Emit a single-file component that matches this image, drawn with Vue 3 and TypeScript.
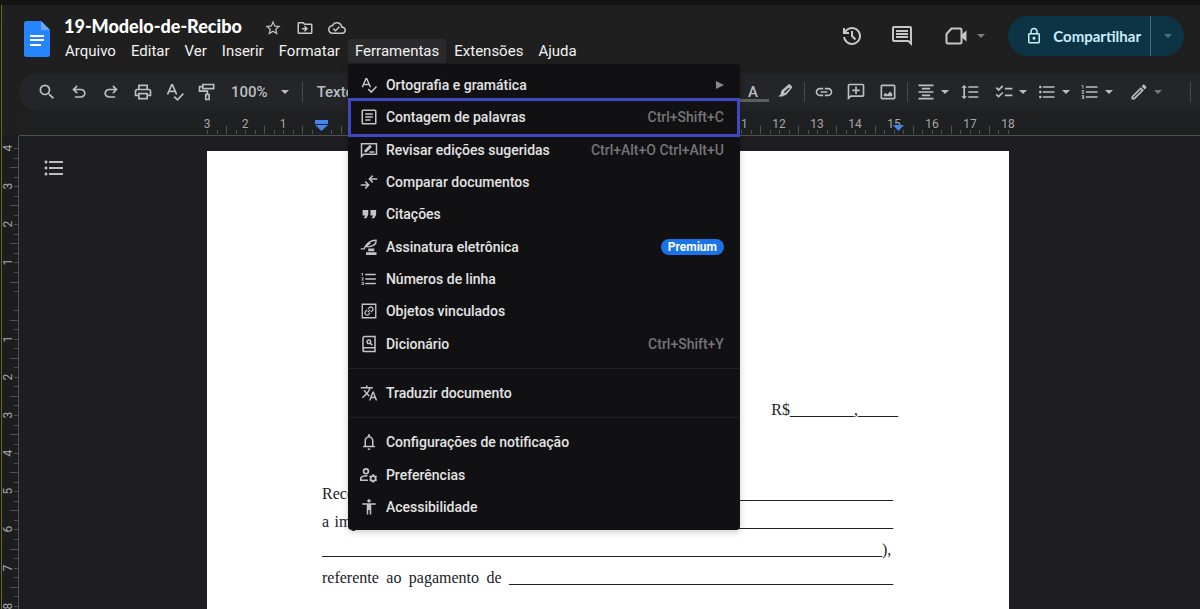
<script setup lang="ts">
import { h, type FunctionalComponent } from 'vue'

interface Glyph {
  f?: string
  s?: string
  w?: number
}

const glyphs: Record<string, Glyph> = {
  star: { f: 'M22 9.24l-7.19-.62L12 2 9.19 8.63 2 9.24l5.46 4.73L5.82 21 12 17.27 18.18 21l-1.63-7.03L22 9.24zM12 15.4l-3.76 2.27 1-4.28-3.32-2.88 4.38-.38L12 6.1l1.71 4.04 4.38.38-3.32 2.88 1 4.28L12 15.4z' },
  move: { f: 'M20 6h-8l-2-2H4c-1.1 0-2 .9-2 2v12c0 1.1.9 2 2 2h16c1.1 0 2-.9 2-2V8c0-1.1-.9-2-2-2zm0 12H4V6h5.17l2 2H20v10zM12.16 12H8v2h4.16l-1.59 1.59L11.99 17 16 13.01 11.99 9l-1.41 1.41z' },
  cloud: { f: 'M19.35 10.04C18.67 6.59 15.64 4 12 4 9.11 4 6.61 5.64 5.36 8.04 2.35 8.36 0 10.9 0 14c0 3.31 2.69 6 6 6h13c2.76 0 5-2.24 5-5 0-2.64-2.05-4.78-4.65-4.96zM19 18H6c-2.21 0-4-1.79-4-4 0-2.05 1.53-3.76 3.56-3.97l1.07-.11.5-.95C8.08 7.14 9.94 6 12 6c2.62 0 4.88 1.86 5.39 4.43l.3 1.5 1.53.11c1.56.1 2.78 1.41 2.78 2.96 0 1.65-1.35 3-3 3zm-9-3.82l-2.09-2.09L6.5 13.5 10 17l6.01-6.01-1.41-1.41z' },
  history: { f: 'M12 21q-3.45 0-6.012-2.287Q3.425 16.425 3.05 13H5.1q.35 2.6 2.313 4.3T12 19q2.925 0 4.963-2.037T19 12t-2.037-4.963T12 5q-1.725 0-3.225.8T6.25 8H9v2H3V4h2v2.35q1.275-1.6 3.113-2.475T12 3q1.875 0 3.513.713t2.85 1.924 1.925 2.85T21 12t-.712 3.513-1.925 2.85-2.85 1.925T12 21m2.8-4.8L11 12.4V7h2v4.6l3.2 3.2z' },
  comment: { f: 'M21.99 4c0-1.1-.89-2-1.99-2H4c-1.1 0-2 .9-2 2v12c0 1.1.9 2 2 2h14l4 4-.01-18zM20 4v13.17L18.83 16H4V4h16zM6 12h12v2H6zm0-3h12v2H6zm0-3h12v2H6z' },
  camera: { f: 'M17 11l5.500-4.500v11L17 13z', s: 'M7.500 4.500H16a1.500 1.500 0 0 1 1.500 1.500v12a1.500 1.500 0 0 1-1.500 1.500H4A1.500 1.500 0 0 1 2.500 18v-8z' },
  lock: { f: 'M18 8h-1V6c0-2.76-2.24-5-5-5S7 3.24 7 6v2H6c-1.1 0-2 .9-2 2v10c0 1.1.9 2 2 2h12c1.1 0 2-.9 2-2V10c0-1.1-.9-2-2-2zM9 6c0-1.66 1.34-3 3-3s3 1.34 3 3v2H9V6zm9 14H6V10h12v10zm-6-3c1.1 0 2-.9 2-2s-.9-2-2-2-2 .9-2 2 .9 2 2 2z' },
  search: { f: 'M15.5 14h-.79l-.28-.27A6.471 6.471 0 0 0 16 9.5 6.5 6.5 0 1 0 9.5 16c1.61 0 3.09-.59 4.23-1.57l.27.28v.79l5 4.99L20.49 19l-4.99-5zm-6 0C7.01 14 5 11.99 5 9.5S7.01 5 9.5 5 14 7.01 14 9.5 11.99 14 9.5 14z' },
  undo: { f: 'M7 19v-2h7.1q1.575 0 2.738-1T18 13.5 16.838 11 14.1 10H7.8l2.6 2.6L9 14 4 9l5-5 1.4 1.4L7.8 8h6.3q2.425 0 4.163 1.575T20 13.5t-1.737 3.925T14.1 19z' },
  redo: { f: 'M9.9 19q-2.425 0-4.163-1.575T4 13.5t1.737-3.925T9.9 8h6.3l-2.6-2.6L15 4l5 5-5 5-1.4-1.4 2.6-2.6H9.9q-1.575 0-2.738 1T6 13.5 7.162 16 9.9 17H17v2z' },
  print: { f: 'M19 8h-1V3H6v5H5c-1.66 0-3 1.34-3 3v6h4v4h12v-4h4v-6c0-1.66-1.34-3-3-3zM8 5h8v3H8V5zm8 12v2H8v-4h8v2zm2-2v-2H6v2H4v-4c0-.55.45-1 1-1h14c.55 0 1 .45 1 1v4h-2z' },
  spell: { s: 'M3 15L8 3.500h1L14 15M4.800 11.300h7.400M11 17.500l4 4 7-7.500' },
  paint: { s: 'M7 3h13v5H7zM7 5.500H3V11h9.500v4M10.500 15h4v6h-4z' },
  link: { f: 'M3.9 12c0-1.71 1.39-3.1 3.1-3.1h4V7H7c-2.76 0-5 2.24-5 5s2.24 5 5 5h4v-1.9H7c-1.71 0-3.1-1.39-3.1-3.1zM8 13h8v-2H8v2zm9-6h-4v1.9h4c1.71 0 3.1 1.39 3.1 3.1s-1.39 3.1-3.1 3.1h-4V17h4c2.76 0 5-2.24 5-5s-2.24-5-5-5z' },
  addComment: { f: 'M20 2H4c-1.1 0-2 .9-2 2v18l4-4h14c1.1 0 2-.9 2-2V4c0-1.1-.9-2-2-2zm0 14H5.2L4 17.2V4h16v12zM11 5.500h2V9h3.500v2H13v3.500h-2V11H7.500V9H11z' },
  image: { f: 'M19 5v14H5V5h14m0-2H5c-1.1 0-2 .9-2 2v14c0 1.100.9 2 2 2h14c1.100 0 2-.9 2-2V5c0-1.100-.9-2-2-2zM7 17v-2l2-2 2 2 3.500-3.500L17 14v3z' },
  marker: { f: 'M13.500 4.500l3-2.500c.8-.6 1.800-.5 2.500.2l2 2c.7.7.7 1.700.1 2.500l-7.600 9.300-3 .5-1.500 1.500H3l3.500-3.500-.1-1.500 1-3zM17 6l-6.500 6 1.500 1.500L18.300 7z' },
  align: { f: 'M7 15v2h10v-2H7zm-4 6h18v-2H3v2zm0-8h18v-2H3v2zm4-6v2h10V7H7zM3 3v2h18V3H3z' },
  spacing: { f: 'M6 7h2.5L5 3.5 1.5 7H4v10H1.5L5 20.5 8.5 17H6V7zm4-2v2h12V5H10zm0 14h12v-2H10v2zm0-6h12v-2H10v2z' },
  checklist: { f: 'M22 7h-9v2h9V7zm0 8h-9v2h9v-2zM5.54 11L2 7.46l1.41-1.41 2.12 2.12 4.24-4.24 1.41 1.41L5.54 11zm0 8L2 15.46l1.41-1.41 2.12 2.12 4.24-4.24 1.41 1.41L5.54 19z' },
  bullets: { f: 'M4 10.5c-.83 0-1.5.67-1.5 1.5s.67 1.5 1.5 1.5 1.5-.67 1.5-1.5-.67-1.5-1.5-1.5zm0-6c-.83 0-1.5.67-1.5 1.5S3.17 7.5 4 7.5 5.5 6.83 5.5 6 4.83 4.5 4 4.5zm0 12c-.83 0-1.5.68-1.5 1.5s.68 1.5 1.5 1.5 1.5-.68 1.5-1.5-.67-1.5-1.5-1.5zM7 19h14v-2H7v2zm0-6h14v-2H7v2zm0-8v2h14V5H7z' },
  numbered: { f: 'M2 17h2v.5H3v1h1v.5H2v1h3v-4H2v1zm1-9h1V4H2v1h1v3zm-1 3h1.8L2 13.1v.9h3v-1H3.2L5 10.9V10H2v1zm5-6v2h14V5H7zm0 14h14v-2H7v2zm0-6h14v-2H7v2z' },
  pencil: { f: 'M14.06 9.02l.92.92L5.92 19H5v-.92l9.06-9.06M17.66 3c-.25 0-.51.1-.7.29l-1.83 1.83 3.75 3.75 1.83-1.83c.39-.39.39-1.02 0-1.41l-2.34-2.34c-.2-.2-.45-.29-.71-.29zm-3.6 3.19L3 17.25V21h3.75L17.81 9.94l-3.75-3.75z' },
  article: { s: 'M4 3h16a1 1 0 0 1 1 1v16a1 1 0 0 1-1 1H4a1 1 0 0 1-1-1V4a1 1 0 0 1 1-1zM7 8h10M7 12h10M7 16h7' },
  review: { s: 'M2 20.500V3.500h20v14H5zM12.500 14.500H19', f: 'M6 15v-2.800L13.200 5l2.800 2.800L8.800 15z' },
  compare: { s: 'M1 16h9.500M7 11.500l4.500 4.500L7 20.500M23 8h-9.500M17 3.500L12.500 8l4.500 4.500' },
  quote: { f: 'M5 17.500h3.500L11 13V6.500H3.500V14H7zM15.500 17.500H19l2.500-4.500V6.500H14V14h3.500z' },
  esign: { s: 'M1 14.500h4.500C8 8.500 11.500 3 21.500 3c.5 5-3.500 7.500-8.500 8.500H7.500M7 11.500l7-5', f: 'M11 14h8v3.500h-8zM8 19h14v3.500H8z', w: 1.8 },
  linked: { s: 'M3 3h18v18H3zM10.500 9.500l2-2a2.700 2.700 0 0 1 4 4l-2 2M13.500 14.500l-2 2a2.700 2.700 0 0 1-4-4l2-2M10.500 13.500l3-3', w: 1.8 },
  dictionary: { s: 'M20 17V2H6.500A2.500 2.500 0 0 0 4 4.500v15A2.500 2.500 0 0 0 6.500 22H20v-5H6.500A2.500 2.500 0 0 0 4 19.500M14.200 9a2.400 2.400 0 1 1-4.800 0 2.400 2.400 0 0 1 4.800 0zM13.500 10.700l3 3' },
  translate: { f: 'M12.87 15.07l-2.54-2.51.03-.03A17.52 17.52 0 0 0 14.07 6H17V4h-7V2H8v2H1v2h11.17C11.5 7.92 10.44 9.75 9 11.35 8.07 10.32 7.3 9.19 6.69 8h-2c.73 1.63 1.73 3.17 2.98 4.56l-5.09 5.02L4 19l5-5 3.11 3.11.76-2.04zM18.5 10h-2L12 22h2l1.12-3h4.75L21 22h2l-4.5-12zm-2.62 7l1.62-4.33L19.12 17h-3.24z' },
  bell: { f: 'M12 22.500c1.1 0 2-.9 2-2h-4c0 1.1.9 2 2 2zm6-6v-6c0-3.07-1.63-5.64-4.5-6.32V3c0-.83-.67-1.5-1.5-1.500s-1.5.67-1.5 1.500v1.180C7.64 4.860 6 7.420 6 10.500v6l-2 1v1.500h16v-1.500l-2-1zm-2 .5H8v-6.500c0-2.48 1.51-4.5 4-4.5s4 2.02 4 4.5v6.500z' },
  prefs: { s: 'M11.200 7a3.200 3.200 0 1 1-6.400 0 3.200 3.200 0 0 1 6.400 0zM10.500 19H1v-2c0-2.500 4-4 9-4M20.800 16.500a3.300 3.300 0 1 1-6.600 0 3.300 3.300 0 0 1 6.600 0zM17.500 11v2.500M17.500 19.500V22M12.700 13.800l2.200 1.200M20.100 18l2.200 1.200M12.700 19.200l2.200-1.200M20.100 15l2.200-1.200', w: 2.3 },
  access: { f: 'M12 1.500c1.300 0 2.300 1 2.300 2.200S13.300 6 12 6 9.700 5 9.700 3.700s1-2.200 2.300-2.200zM21 9h-6v13h-2v-6h-2v6H9V9H3V7h18v2z' },
}

const Icon: FunctionalComponent<{ name: string; size?: number }> = (props) => {
  const g = glyphs[props.name]
  const size = props.size ?? 18
  return h('svg', { viewBox: '0 0 24 24', width: size, height: size, 'aria-hidden': 'true' }, [
    g.s ? h('path', { d: g.s, fill: 'none', stroke: 'currentColor', 'stroke-width': g.w ?? 2 }) : null,
    g.f ? h('path', { d: g.f, fill: 'currentColor', 'fill-rule': 'evenodd' }) : null,
  ])
}
Icon.props = ['name', 'size']

interface Entry {
  icon: string
  label: string
  keys?: string
  badge?: string
  submenu?: boolean
  marked?: boolean
}

const menuBefore = ['Arquivo', 'Editar', 'Ver', 'Inserir', 'Formatar']
const menuAfter = ['Extensões', 'Ajuda']

const groups: Entry[][] = [
  [
    { icon: 'spell', label: 'Ortografia e gramática', submenu: true },
    { icon: 'article', label: 'Contagem de palavras', keys: 'Ctrl+Shift+C', marked: true },
    { icon: 'review', label: 'Revisar edições sugeridas', keys: 'Ctrl+Alt+O Ctrl+Alt+U' },
    { icon: 'compare', label: 'Comparar documentos' },
    { icon: 'quote', label: 'Citações' },
    { icon: 'esign', label: 'Assinatura eletrônica', badge: 'Premium' },
    { icon: 'numbered', label: 'Números de linha' },
    { icon: 'linked', label: 'Objetos vinculados' },
    { icon: 'dictionary', label: 'Dicionário', keys: 'Ctrl+Shift+Y' },
  ],
  [{ icon: 'translate', label: 'Traduzir documento' }],
  [
    { icon: 'bell', label: 'Configurações de notificação' },
    { icon: 'prefs', label: 'Preferências' },
    { icon: 'access', label: 'Acessibilidade' },
  ],
]

const leftTools = [
  ['search', 'Pesquisar'],
  ['undo', 'Desfazer'],
  ['redo', 'Refazer'],
  ['print', 'Imprimir'],
  ['spell', 'Verificar ortografia'],
  ['paint', 'Pintar formatação'],
]
const insertTools = [
  ['link', 'Inserir link'],
  ['addComment', 'Adicionar comentário'],
  ['image', 'Inserir imagem'],
]
const listTools = [
  ['checklist', 'Lista de verificação'],
  ['bullets', 'Lista com marcadores'],
  ['numbered', 'Lista numerada'],
]

/* Rulers: quarter-centimetre ticks, 21 cm span 801 px. */
const cm = (n: number) => Math.round((n * 801) / 21)

interface Tick {
  pos: number
  half: boolean
}
const makeTicks = (from: number, to: number): Tick[] => {
  const out: Tick[] = []
  for (let q = from * 4; q <= to * 4; q++) {
    if (q !== 0) out.push({ pos: cm(q / 4 - from), half: Math.abs(q % 4) === 2 })
  }
  return out
}
const makeLabels = (from: number, to: number) => {
  const out: { pos: number; text: string }[] = []
  for (let n = from; n <= to; n++) {
    if (n !== 0) out.push({ pos: cm(n - from), text: String(Math.abs(n)) })
  }
  return out
}
const hTicks = makeTicks(-3, 18)
const hLabels = makeLabels(-3, 18)
const vTicks = makeTicks(-4, 8)
const vLabels = makeLabels(-4, 8)

const blank = (n: number) => '_'.repeat(n)
</script>

<template>
  <div class="app">
    <header class="header">
      <svg class="logo" viewBox="0 0 26 36" width="26" height="36" aria-hidden="true">
        <path d="M2.500 0H17l9 9v24.500a2.500 2.500 0 0 1-2.500 2.500h-21A2.500 2.500 0 0 1 0 33.500v-31A2.500 2.500 0 0 1 2.500 0z" fill="#2684fc" />
        <path d="M17 0l9 9h-9z" fill="#6ba6fb" />
        <path d="M6 14h14v2H6zM6 18h14v2H6zM6 23h11v2H6z" fill="#fff" />
      </svg>
      <div class="heading">
        <div class="title-row">
          <h1>19-Modelo-de-Recibo</h1>
          <button class="plain" type="button" aria-label="Marcar com estrela"><Icon name="star" /></button>
          <button class="plain" type="button" aria-label="Mover"><Icon name="move" /></button>
          <button class="plain" type="button" aria-label="Status do documento"><Icon name="cloud" /></button>
        </div>
        <nav class="menubar" aria-label="Menu principal">
          <button v-for="m in menuBefore" :key="m" type="button">{{ m }}</button>
          <div class="menu-anchor">
            <button class="open" type="button" aria-expanded="true">Ferramentas</button>
            <div class="menu">
              <template v-for="(group, gi) in groups" :key="gi">
                <hr v-if="gi > 0" />
                <button v-for="e in group" :key="e.label" type="button" class="entry" :class="{ marked: e.marked }">
                  <Icon :name="e.icon" class="entry-icon" />
                  <span class="entry-label">{{ e.label }}</span>
                  <span v-if="e.keys" class="keys">{{ e.keys }}</span>
                  <span v-if="e.badge" class="badge">{{ e.badge }}</span>
                  <svg v-if="e.submenu" class="more" viewBox="0 0 8 8" width="8" height="8" aria-hidden="true">
                    <path d="M0 0l8 4-8 4z" fill="currentColor" />
                  </svg>
                </button>
              </template>
            </div>
          </div>
          <button v-for="m in menuAfter" :key="m" type="button">{{ m }}</button>
        </nav>
      </div>
      <div class="actions">
        <button class="plain" type="button" aria-label="Histórico de versões"><Icon name="history" :size="24" /></button>
        <button class="plain" type="button" aria-label="Comentários"><Icon name="comment" :size="24" /></button>
        <button class="plain meet" type="button" aria-label="Videochamada">
          <Icon name="camera" :size="24" /><span class="caret dim"></span>
        </button>
        <div class="share">
          <button class="share-main" type="button"><Icon name="lock" :size="18" />Compartilhar</button>
          <button class="share-more" type="button" aria-label="Opções de compartilhamento"><span class="caret"></span></button>
        </div>
      </div>
    </header>

    <div class="toolbar" role="toolbar" aria-label="Ferramentas de edição">
      <button v-for="[icon, label] in leftTools" :key="icon" class="tool" type="button" :aria-label="label">
        <Icon :name="icon" :size="20" />
      </button>
      <button class="zoom" type="button">100%<span class="caret"></span></button>
      <span class="sep"></span>
      <button class="style" type="button">Texto normal</button>
      <div class="tools-end">
        <button class="tool letter" type="button" aria-label="Cor do texto">A</button>
        <button class="tool" type="button" aria-label="Cor de destaque"><Icon name="marker" /></button>
        <span class="sep"></span>
        <button v-for="[icon, label] in insertTools" :key="icon" class="tool" type="button" :aria-label="label">
          <Icon :name="icon" :size="20" />
        </button>
        <span class="sep"></span>
        <button class="split" type="button" aria-label="Alinhar"><Icon name="align" :size="20" /><span class="caret"></span></button>
        <button class="tool" type="button" aria-label="Espaçamento entre linhas"><Icon name="spacing" :size="20" /></button>
        <button v-for="[icon, label] in listTools" :key="icon" class="split" type="button" :aria-label="label">
          <Icon :name="icon" :size="20" /><span class="caret"></span>
        </button>
        <button class="split mode" type="button" aria-label="Modo de edição">
          <Icon name="pencil" :size="20" /><span class="caret dim"></span>
        </button>
        <span class="sep last"></span>
      </div>
    </div>

    <div class="ruler">
      <svg class="ruler-scale" height="24" aria-hidden="true">
        <line v-for="t in hTicks" :key="t.pos" :x1="t.pos" :x2="t.pos" :y1="t.half ? 15 : 19" y2="23" class="tick" />
        <text v-for="l in hLabels" :key="l.pos" :x="l.pos" y="17" text-anchor="middle" class="num">{{ l.text }}</text>
        <path d="M108 9h13v4h-13zM108 14h13l-6.500 6z" class="stop" />
        <path d="M686 14h11l-5.500 6z" class="stop" />
      </svg>
    </div>

    <div class="workspace">
      <div class="vruler">
        <svg class="vscale" width="16" height="472" aria-hidden="true">
          <line v-for="t in vTicks" :key="t.pos" :y1="t.pos + 12" :y2="t.pos + 12" :x1="t.half ? 8 : 12" x2="16" class="tick" />
          <text
            v-for="l in vLabels"
            :key="l.pos"
            :transform="`translate(10 ${l.pos + 12}) rotate(-90)`"
            text-anchor="middle"
            class="num"
          >{{ l.text }}</text>
        </svg>
      </div>
      <main class="canvas">
        <button class="outline" type="button" aria-label="Mostrar estrutura"><Icon name="bullets" :size="24" /></button>
        <article class="page">
          <p class="amount">R${{ blank(8) }},{{ blank(5) }}</p>
          <p class="fill">Recebi de {{ blank(62) }}</p>
          <p class="fill">a importância de {{ blank(57) }}</p>
          <p>{{ blank(70) }}),</p>
          <p class="fill">referente ao pagamento de {{ blank(48) }}</p>
        </article>
      </main>
    </div>
  </div>
</template>

<style>
html,
body {
  margin: 0;
  background: #1e1f22;
}
</style>

<style scoped>
.app {
  box-sizing: border-box;
  height: 100vh;
  display: flex;
  flex-direction: column;
  overflow: hidden;
  padding-left: 1px;
  border-top: 5px solid #131314;
  background: linear-gradient(90deg, #151515 1px, #6f6422 1px, #6f6422 2px, #1f1f1f 2px);
  color: #e3e3e3;
  font-family: Roboto, 'Liberation Sans', sans-serif;
}
button {
  display: flex;
  align-items: center;
  margin: 0;
  padding: 0;
  border: 0;
  background: none;
  color: inherit;
  font: inherit;
  white-space: nowrap;
  cursor: pointer;
}
svg {
  display: block;
  flex: none;
}

/* Header */
.header {
  display: flex;
  height: 68px;
  flex: none;
  padding: 0 16px 0 23px;
}
.logo {
  margin-top: 16px;
}
.heading {
  margin-left: 5px;
  padding-top: 7px;
}
.title-row {
  display: flex;
  align-items: center;
  height: 27px;
  padding-left: 9px;
  gap: 14px;
}
h1 {
  margin: 0 8px 0 0;
  color: #fff;
  font: 900 18px/26px Lato, sans-serif;
}
.title-row .plain {
  padding-top: 4px;
}
.plain {
  color: #c7c7c7;
}
.menubar {
  display: flex;
  gap: 1px;
  padding-left: 3px;
  font-size: 15px;
  color: #f1f1f1;
}
.menubar > button,
.open {
  height: 24px;
  padding: 0 7px;
}
.menu-anchor {
  position: relative;
}
.open {
  border-radius: 3px 3px 0 0;
  background: #2b2b2d;
}
.menu {
  position: absolute;
  z-index: 5;
  top: 25px;
  left: 0;
  box-sizing: border-box;
  width: 392px;
  min-height: 466px;
  display: flex;
  flex-direction: column;
  padding: 5px 0 7px;
  border-radius: 0 4px 4px 4px;
  background: #111113;
  box-shadow: 0 2px 6px rgba(0, 0, 0, 0.2);
}
.menu hr {
  width: 100%;
  height: 1px;
  margin: 8px 0;
  border: 0;
  background: #222224;
}
.entry {
  position: relative;
  flex: 1 1 32px;
  padding: 0 16px 0 12px;
  color: #e3e3e3;
  font-size: 14px;
  font-weight: 500;
}
.entry-icon {
  color: #c4c4c4;
}
.entry-label {
  flex: 1;
  margin-left: 8px;
  text-align: left;
}
.keys {
  color: #757577;
}
.more {
  color: #8a8a8a;
}
.badge {
  padding: 0 7px;
  border-radius: 8px;
  background: #1a73e8;
  color: #fff;
  font-size: 12px;
  font-weight: 700;
  line-height: 16px;
}
.marked::after {
  content: '';
  position: absolute;
  inset: -3px 0;
  border: 3px solid #3f48c0;
}

.actions {
  display: flex;
  align-items: center;
  align-self: flex-start;
  height: 61px;
  margin-left: auto;
}
.actions .plain {
  margin-right: 26px;
}
.actions .meet {
  gap: 9px;
  margin-left: 4px;
  margin-right: 23px;
}
.caret {
  width: 0;
  border: 4px solid transparent;
  border-top-color: currentColor;
  border-bottom: 0;
}
.dim {
  opacity: 0.55;
}
.share {
  display: flex;
  height: 40px;
  border-radius: 20px;
  overflow: hidden;
  background: #0c3444;
  color: #c9ecfa;
  font: 700 15px Lato, sans-serif;
}
.share-main {
  gap: 10px;
  padding: 0 9px 0 17px;
}
.share-more {
  width: 34px;
  justify-content: center;
  border-left: 1px solid #4a6672;
  color: #56707b;
}

/* Toolbar */
.toolbar {
  display: flex;
  align-items: center;
  flex: none;
  height: 38px;
  margin-left: 18px;
  padding-left: 12px;
  border-radius: 19px 0 0 19px;
  background: #232529;
  color: #bdbec0;
  overflow: hidden;
}
.tool {
  flex: none;
  width: 32px;
  height: 30px;
  justify-content: center;
}
.zoom {
  flex: none;
  gap: 13px;
  padding: 0 7px 0 8px;
  font-size: 15px;
  font-weight: 500;
}
.sep {
  flex: none;
  width: 1px;
  height: 20px;
  margin: 0 3px;
  background: #48494c;
}
.zoom + .sep {
  margin: 0 14px 0 6px;
}
.style {
  font-size: 15px;
  font-weight: 500;
}
.tools-end {
  display: flex;
  align-items: center;
  margin-left: auto;
}
.letter {
  font-size: 15px;
  font-weight: 500;
  box-shadow: inset 0 -3px #5c5e60;
}
.split {
  flex: none;
  gap: 5px;
  width: 43px;
  padding-left: 5px;
}
.tool + .split {
  margin-left: 3px;
}
.split.mode {
  margin: 0 23px 0 6px;
}
.sep.last {
  margin: 0 9px 0 0;
}
.tools-end .letter {
  height: 20px;
}

/* Rulers */
.ruler {
  display: flex;
  flex: none;
  justify-content: center;
  margin-left: 18px;
  padding-right: 3px;
  border-bottom: 1px solid #505154;
  background: #1f2022;
}
.ruler-scale {
  width: 802px;
  overflow: visible;
}
.tick {
  stroke: #505154;
  stroke-width: 1;
  shape-rendering: crispEdges;
}
.num {
  fill: #a6a7a9;
  font-size: 12px;
}
.stop {
  fill: #4385ea;
}
.workspace {
  display: flex;
  flex: 1;
  min-height: 0;
}
.vruler {
  flex: none;
  margin-left: 1px;
  border-right: 1px solid #505154;
  background: #1b1d1f;
}
.vscale {
  overflow: visible;
}
.canvas {
  position: relative;
  display: flex;
  flex: 1;
  justify-content: center;
  overflow: hidden;
  padding: 15px 3px 0 0;
  background: #1e1e22;
}
.outline {
  position: absolute;
  top: 20px;
  left: 23px;
  color: #bdbec0;
}
.page {
  box-sizing: border-box;
  width: 802px;
  padding: 245px 116px 0 115px;
  background: #fff;
  color: #202124;
  font: 16px/28px 'Liberation Serif', serif;
}
.page p {
  margin: 0;
  white-space: nowrap;
}
.page .amount {
  margin: 0 -5px 56px 0;
  text-align: right;
}
.page .fill {
  white-space: normal;
  text-align: justify;
  text-align-last: justify;
}
</style>
